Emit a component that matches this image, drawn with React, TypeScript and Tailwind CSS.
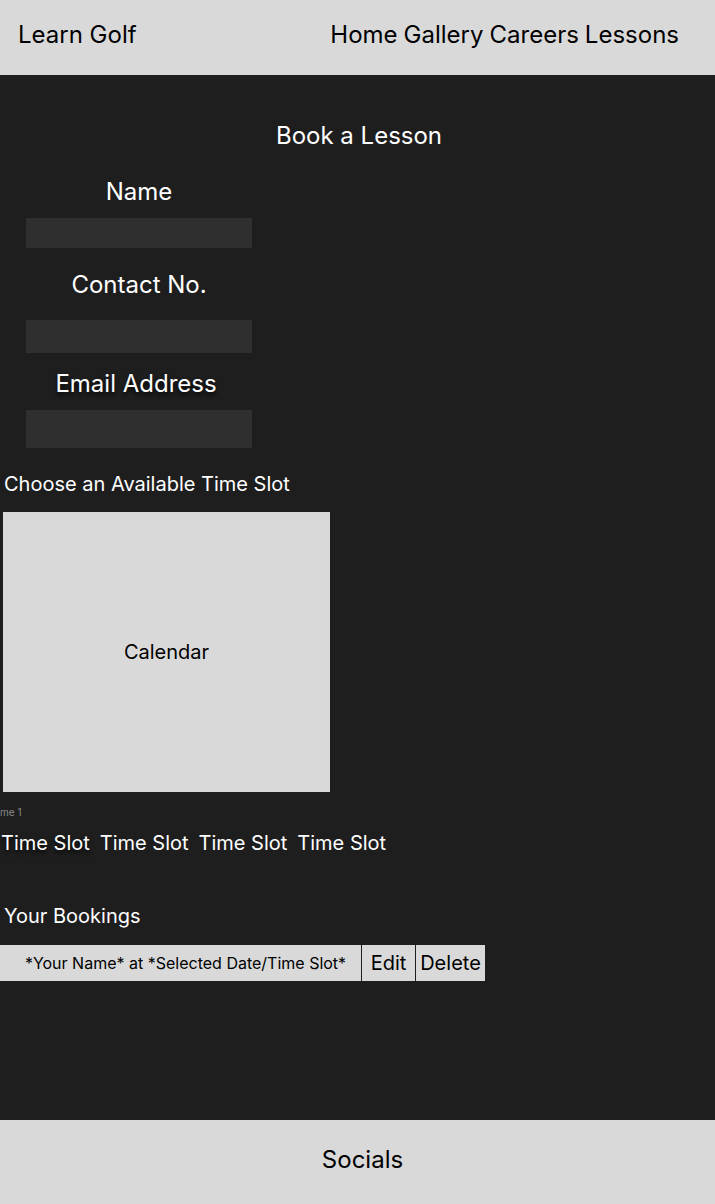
export default function App() {
  const slots = ["Time Slot", "Time Slot", "Time Slot", "Time Slot"];
  return (
    <div className="flex h-[1204px] flex-col bg-[#1e1e1e] font-['Inter',sans-serif]">
      <header className="flex h-[75px] shrink-0 items-center justify-between bg-[#d9d9d9] pb-[6px] pl-[18px] pr-[36px] text-[24px] text-black">
        <span>Learn Golf</span>
        <nav className="flex gap-[6px]">
          <a>Home</a>
          <a>Gallery</a>
          <a>Careers</a>
          <a>Lessons</a>
        </nav>
      </header>

      <main className="flex-1 text-white">
        <h1 className="mt-[46px] pl-[3px] text-center text-[24px] leading-[30px]">Book a Lesson</h1>

        <div className="ml-[26px] mt-[26px] flex w-[226px] flex-col items-center text-[24px]">
          <label className="leading-[30px]">Name</label>
          <div className="mt-[11px] h-[30px] w-full bg-[#2f2f2f]" />
          <label className="mt-[22px] leading-[30px]">Contact No.</label>
          <div className="mt-[20px] h-[33px] w-full bg-[#2f2f2f]" />
          <label className="mt-[16px] pr-[6px] leading-[30px] [text-shadow:0_3px_4px_rgba(0,0,0,0.8)]">
            Email Address
          </label>
          <div className="mt-[11px] h-[38px] w-full bg-[#2f2f2f]" />
        </div>

        <h2 className="ml-[4px] mt-[23px] text-[20px] leading-[26px]">Choose an Available Time Slot</h2>

        <div className="ml-[3px] mt-[15px] flex h-[280px] w-[327px] items-center justify-center bg-[#d9d9d9] text-[20px] text-black">
          Calendar
        </div>

        <div className="mt-[14px] h-[12px] text-[10px] leading-[12px] text-[#8a8a8a]">me 1</div>

        <div className="mt-[12px] flex gap-[10px] pl-[1px] text-[20px] leading-[26px]">
          {slots.map((s, i) => (
            <span key={i} className={i === 0 ? "[text-shadow:0_3px_4px_rgba(0,0,0,0.8)]" : ""}>
              {s}
            </span>
          ))}
        </div>

        <h2 className="ml-[4px] mt-[47px] text-[20px] leading-[26px]">Your Bookings</h2>

        <div className="mt-[16px] flex h-[36px] w-[485px] text-black">
          <div className="flex w-[361px] items-center justify-center bg-[#d9d9d9] pl-[10px] text-[16px]">
            *Your Name* at *Selected Date/Time Slot*
          </div>
          <div className="ml-[1px] flex w-[53px] items-center justify-center bg-[#d9d9d9] text-[20px]">Edit</div>
          <div className="ml-[1px] flex flex-1 items-center justify-center bg-[#d9d9d9] text-[20px]">Delete</div>
        </div>
      </main>

      <footer className="flex h-[84px] shrink-0 items-center justify-center bg-[#d9d9d9] pb-[4px] pl-[10px] text-[24px] text-black">
        Socials
      </footer>
    </div>
  );
}
